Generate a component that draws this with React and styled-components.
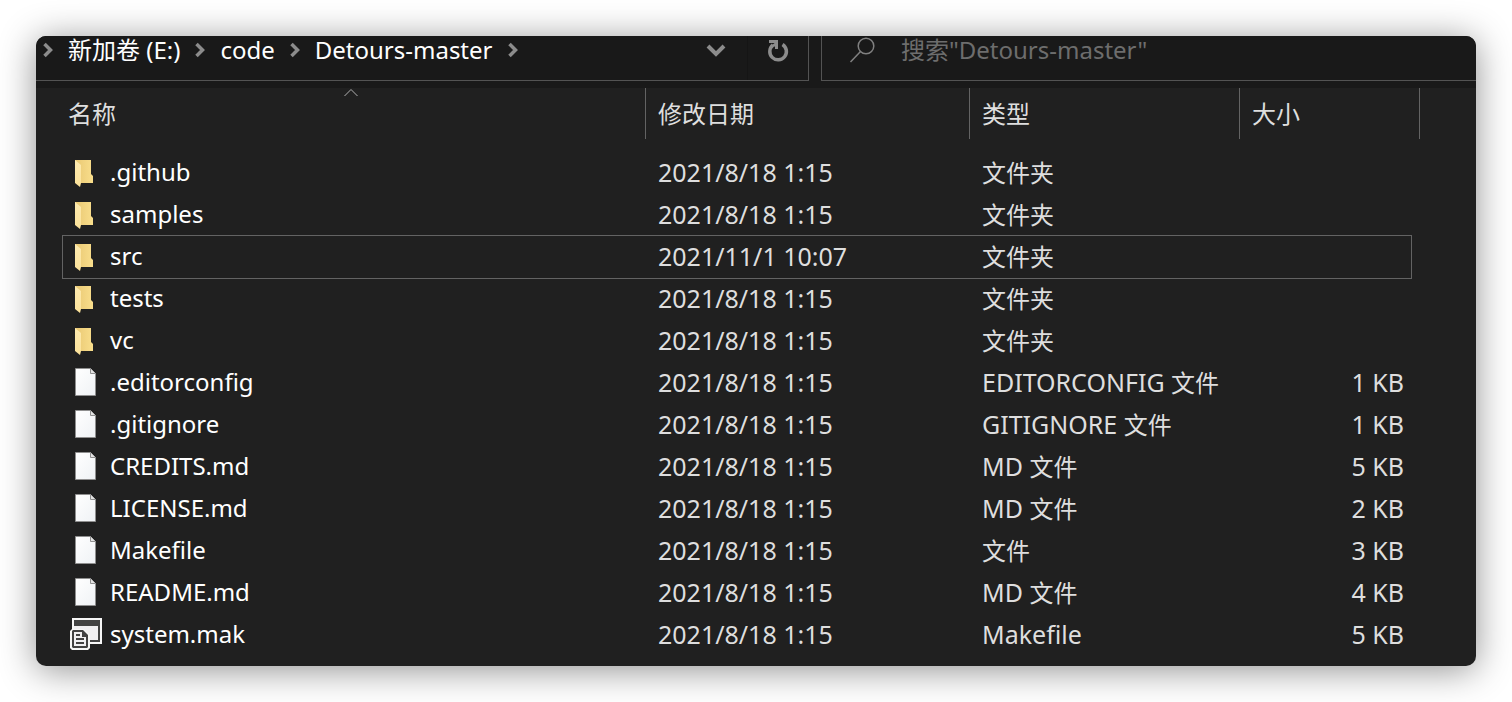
import React from "react";
import styled, { createGlobalStyle } from "styled-components";

const GlobalStyle = createGlobalStyle`
  *, *::before, *::after { box-sizing: border-box; }
  body {
    margin: 0;
    background: #fff;
    font-family: "Noto Sans", "Noto Sans CJK SC", sans-serif;
    font-size: 24px;
    line-height: 28px;
    color: #fff;
  }
`;

const Page = styled.div`
  padding: 36px;
`;

const Window = styled.main`
  border-radius: 10px;
  background: #202020;
  box-shadow: 0 4px 36px rgba(0, 0, 0, 0.44);
`;

const Toolbar = styled.header`
  display: grid;
  grid-template-columns: minmax(0, 773fr) minmax(0, 655fr);
  gap: 12px;
  padding-bottom: 7px;
  border-radius: 10px 10px 0 0;
  background: #191919;
`;

const AddressBar = styled.nav`
  display: flex;
  height: 45px;
  border: solid #535353;
  border-width: 0 1px 1px 0;
`;

const Crumbs = styled.ol`
  flex: 1;
  display: flex;
  align-items: center;
  gap: 14px;
  margin: 0;
  padding: 0 0 16px 6px;
  list-style: none;
`;

const Crumb = styled.li`
  display: flex;
  align-items: center;
  gap: 14px;
  white-space: nowrap;
`;

const CrumbLink = styled.a`
  color: #fff;
  text-decoration: none;
`;

const BarButton = styled.button`
  display: flex;
  justify-content: center;
  align-items: center;
  width: ${(p) => p.$width}px;
  padding: 0 0 16px;
  border: solid #151515;
  border-width: 0 ${(p) => (p.$divided ? 1 : 0)}px 0 0;
  background: none;
  color: #8c8c8c;
`;

const SearchBox = styled.label`
  display: flex;
  align-items: center;
  gap: 26px;
  height: 45px;
  padding: 0 0 16px 27px;
  border: solid #535353;
  border-width: 0 0 1px 1px;
  color: #808080;
`;

const SearchInput = styled.input`
  flex: 1;
  min-width: 0;
  height: 28px;
  padding: 0;
  border: 0;
  outline: 0;
  background: none;
  color: #fff;
  font: inherit;
  &::placeholder { color: #6d6d6d; opacity: 1; }
`;

const Han = styled.span`
  font-size: 24px;
`;

const ListPane = styled.section`
  padding: 0 65px 10px 27px;
`;

const FileTable = styled.table`
  width: 100%;
  table-layout: fixed;
  border-collapse: collapse;
`;

const HeadCell = styled.th`
  position: relative;
  width: ${(p) => (p.$width ? `${p.$width}px` : "auto")};
  height: 64px;
  padding: 0;
  font-weight: 400;
  vertical-align: top;
  &:last-child::after {
    content: "";
    position: absolute;
    top: 0;
    right: -9px;
    width: 1px;
    height: 51px;
    background: #636363;
  }
`;

const SortButton = styled.button`
  display: block;
  width: 100%;
  height: 51px;
  padding: 0 0 0 ${(p) => (p.$first ? 5 : 12)}px;
  border: solid #636363;
  border-width: 0 ${(p) => (p.$last ? 0 : 1)}px 0 0;
  background: none;
  color: #dedede;
  font: inherit;
  text-align: left;
`;

const SortMark = styled.svg`
  position: absolute;
  top: 0;
  left: 0;
  right: 8px;
  margin: 0 auto;
`;

const FileRow = styled.tr`
  height: 42px;
  outline: ${(p) => (p.$focused ? "1px solid #636363" : "none")};
`;

const Cell = styled.td`
  padding: 0 ${(p) => (p.$right ? 7 : 0)}px 2px ${(p) => (p.$right ? 0 : 12)}px;
  color: #dedede;
  font-size: 25px;
  text-align: ${(p) => (p.$right ? "right" : "left")};
  white-space: nowrap;
`;

const NameCell = styled(Cell)`
  padding: 0 0 0 7px;
  color: #fff;
  font-size: 24px;
`;

const NameLine = styled.div`
  display: flex;
  align-items: center;
  gap: 8px;
`;

const FileName = styled.span`
  padding-bottom: 2px;
`;

const Label = ({ children }) =>
  children
    .split(/([\u4e00-\u9fff]+)/)
    .filter(Boolean)
    .map((part, i) => (/[\u4e00-\u9fff]/.test(part) ? <Han key={i}>{part}</Han> : part));

const Chevron = () => (
  <svg width="12" height="16" viewBox="0 0 12 16" fill="none" stroke="#8c8c8c" strokeWidth="3.500" aria-hidden="true">
    <path d="M2.500 2 8.500 8l-6 6" />
  </svg>
);

const FolderIcon = () => (
  <svg width="32" height="34" viewBox="0 0 32 34" aria-hidden="true">
    <defs>
      <linearGradient id="folderBack" x1="0" x2="1" y1="0" y2="0">
        <stop offset="0" stopColor="#e9c873" />
        <stop offset="1" stopColor="#f9de8c" />
      </linearGradient>
      <linearGradient id="folderFront" x1="0" x2="0" y1="0" y2="1">
        <stop offset="0" stopColor="#fdeab0" />
        <stop offset="1" stopColor="#fbe199" />
      </linearGradient>
    </defs>
    <path d="M5 4h16v14l2 2v7H5z" fill="url(#folderBack)" />
    <path d="M5 4l6 5v18l-1 4-5-4z" fill="url(#folderFront)" />
  </svg>
);

const DocumentIcon = () => (
  <svg width="32" height="34" viewBox="0 0 32 34" aria-hidden="true">
    <defs>
      <linearGradient id="paper" x1="0" x2="1" y1="0" y2="1">
        <stop offset="0" stopColor="#fff" />
        <stop offset="1" stopColor="#eff2f5" />
      </linearGradient>
    </defs>
    <path d="M5.500 2.500h15l5 5v22h-20z" fill="url(#paper)" stroke="#8f8f8f" />
    <path d="M20.500 2.500v5h5" fill="#e3e3e3" stroke="#8f8f8f" />
  </svg>
);

const MakeIcon = () => (
  <svg width="32" height="34" viewBox="0 0 32 34" aria-hidden="true">
    <path d="M2 0h30v26H2z" fill="#f6f6f6" />
    <path d="M4 2h26v22H4z" fill="#424242" />
    <path d="M4 8h24v14H4z" fill="#f0eff1" />
    <path d="M2 11h12l6 6v13l-2 2H2l-2-2V13z" fill="#f6f6f6" />
    <path d="M3 12h10l5 5v12l-1 1H3l-1-1V13z" fill="#424242" />
    <path d="M4 14h8v5h4v9H4z" fill="#f0eff1" />
    <path d="M6 17h4M6 21h8M6 25h8" stroke="#424242" strokeWidth="2" />
  </svg>
);

const icons = { folder: FolderIcon, document: DocumentIcon, make: MakeIcon };

const path = ["新加卷 (E:)", "code", "Detours-master"];

const columns = [
  { title: "名称", sorted: true },
  { title: "修改日期", width: 324 },
  { title: "类型", width: 270 },
  { title: "大小", width: 171 },
];

const early = "2021/8/18 1:15";

const files = [
  { name: ".github", date: early, type: "文件夹", icon: "folder" },
  { name: "samples", date: early, type: "文件夹", icon: "folder" },
  { name: "src", date: "2021/11/1 10:07", type: "文件夹", icon: "folder", focused: true },
  { name: "tests", date: early, type: "文件夹", icon: "folder" },
  { name: "vc", date: early, type: "文件夹", icon: "folder" },
  { name: ".editorconfig", date: early, type: "EDITORCONFIG 文件", size: "1 KB", icon: "document" },
  { name: ".gitignore", date: early, type: "GITIGNORE 文件", size: "1 KB", icon: "document" },
  { name: "CREDITS.md", date: early, type: "MD 文件", size: "5 KB", icon: "document" },
  { name: "LICENSE.md", date: early, type: "MD 文件", size: "2 KB", icon: "document" },
  { name: "Makefile", date: early, type: "文件", size: "3 KB", icon: "document" },
  { name: "README.md", date: early, type: "MD 文件", size: "4 KB", icon: "document" },
  { name: "system.mak", date: early, type: "Makefile", size: "5 KB", icon: "make" },
];

export default function App() {
  return (
    <Page>
      <GlobalStyle />
      <Window>
        <Toolbar>
          <AddressBar>
            <Crumbs>
              <Chevron />
              {path.map((name) => (
                <Crumb key={name}>
                  <CrumbLink href="#">{name}</CrumbLink>
                  <Chevron />
                </Crumb>
              ))}
            </Crumbs>
            <BarButton type="button" $width={64} $divided aria-label="展开">
              <svg width="20" height="14" viewBox="0 0 20 14" fill="none" stroke="currentColor" strokeWidth="4" aria-hidden="true">
                <path d="M2 3l8 8 8-8" />
              </svg>
            </BarButton>
            <BarButton type="button" $width={60} aria-label="刷新">
              <svg width="22" height="24" viewBox="0 0 22 24" fill="none" stroke="currentColor" aria-hidden="true">
                <path d="M15.500 6.500A8.300 8.300 0 1 1 6 7" strokeWidth="3.500" />
                <path d="M2 3.500h7.500v7.500" strokeWidth="3" />
                <path d="M4 8l6-5v6z" fill="currentColor" stroke="none" />
              </svg>
            </BarButton>
          </AddressBar>
          <SearchBox>
            <svg width="26" height="26" viewBox="0 0 26 26" fill="none" stroke="currentColor" strokeWidth="1.500" aria-hidden="true">
              <circle cx="17" cy="9" r="7.800" />
              <path d="M11.500 14.500 1.500 25" />
            </svg>
            <SearchInput type="search" aria-label="搜索" placeholder={'搜索"Detours-master"'} />
          </SearchBox>
        </Toolbar>
        <ListPane>
          <FileTable>
            <thead>
              <tr>
                {columns.map((c, i) => (
                  <HeadCell key={c.title} $width={c.width} scope="col">
                    <SortButton type="button" $first={i === 0} $last={i === columns.length - 1}>
                      {c.title}
                    </SortButton>
                    {c.sorted && (
                      <SortMark width="14" height="9" viewBox="0 0 14 9" fill="none" stroke="#b0b0b0" aria-hidden="true">
                        <path d="M.5 8 7 1.500 13.500 8" />
                      </SortMark>
                    )}
                  </HeadCell>
                ))}
              </tr>
            </thead>
            <tbody>
              {files.map((f) => {
                const Icon = icons[f.icon];
                return (
                  <FileRow key={f.name} $focused={f.focused}>
                    <NameCell>
                      <NameLine><Icon /><FileName>{f.name}</FileName></NameLine>
                    </NameCell>
                    <Cell>{f.date}</Cell>
                    <Cell><Label>{f.type}</Label></Cell>
                    <Cell $right>{f.size}</Cell>
                  </FileRow>
                );
              })}
            </tbody>
          </FileTable>
        </ListPane>
      </Window>
    </Page>
  );
}
